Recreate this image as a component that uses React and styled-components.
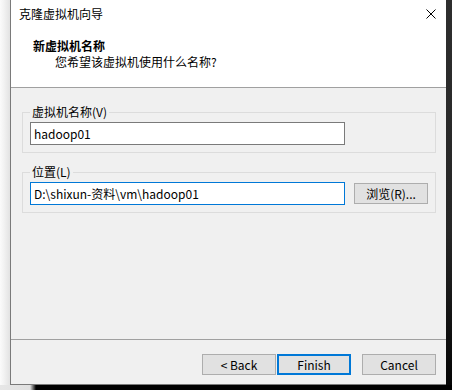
import React from 'react';
import styled, { createGlobalStyle } from 'styled-components';

const GlobalStyle = createGlobalStyle`
  html, body {
    margin: 0;
    padding: 0;
    background: #000;
  }
  body {
    font-family: "Noto Sans CJK SC", "Noto Sans", sans-serif;
    font-size: 12px;
    color: #000;
  }
`

const Desktop = styled.div`
  display: grid;
  grid-template-columns: 10px 436px 6px;
  grid-template-rows: 385px 5px;
  width: 452px;
  height: 390px;
  overflow: hidden;
`

const LeftShadow = styled.div`
  background: linear-gradient(to right, #fbfbfb 0%, #f2f2f2 40%, #e2e2e2 100%);
`

const RightEdge = styled.div`
  background: linear-gradient(to bottom, #2e2e2e 0%, #262626 60%, #050505 100%);
`

const BottomShadow = styled.div`
  grid-column: 1 / span 2;
  background: linear-gradient(to right, #e6e6e6 0px, #e0e0e0 30px, #000 36px);
`

const BottomRight = styled.div`
  background: #000;
`

const Window = styled.div`
  display: flex;
  flex-direction: column;
  background: #f0f0f0;
  border-left: 1px solid #7a7a7a;
  border-bottom: 1px solid #7a7a7a;
`

const Header = styled.div`
  background: #fff;
  height: 87px;
  border-bottom: 1px solid #a0a0a0;
`

const TitleBar = styled.div`
  display: flex;
  align-items: center;
  justify-content: space-between;
  height: 28px;
  padding: 0 10px 0 8px;
`

const Title = styled.span`
  line-height: 16px;
`

const CloseIcon = styled.svg`
  width: 10px;
  height: 10px;
`

const Heading = styled.div`
  padding: 10px 0 0 22px;
  line-height: 16px;
`

const HeadingTitle = styled.div`
  font-weight: bold;
`

const HeadingSub = styled.div`
  padding-left: 22px;
`

const Body = styled.div`
  flex: 1;
  display: flex;
  flex-direction: column;
  gap: 11px;
  padding: 16px 10px 0 11px;
`

const Group = styled.fieldset`
  margin: 0;
  padding: 2px 7px 7px 7px;
  border: 1px solid #dcdcdc;
  min-width: 0;
`

const Legend = styled.legend`
  padding: 0 2px;
  line-height: 16px;
`

const Row = styled.div`
  display: flex;
  align-items: center;
  gap: 9px;
`

const TextInput = styled.input`
  box-sizing: border-box;
  width: 315px;
  height: 23px;
  margin: 0;
  padding: 0 3px;
  font: inherit;
  color: #000;
  background: #fff;
  border: 1px solid ${p => (p.$focused ? '#0078d7' : '#7a7a7a')};
  outline: none;
`

const Button = styled.button`
  box-sizing: border-box;
  width: 74px;
  height: 21px;
  margin: 0;
  padding: 0;
  font: inherit;
  color: #000;
  background: #e1e1e1;
  border: ${p => (p.$default ? '2px solid #0078d7' : '1px solid #adadad')};
`

const Footer = styled.div`
  display: flex;
  justify-content: flex-end;
  height: 45px;
  box-sizing: border-box;
  padding: 14px 10px 0 0;
  border-top: 1px solid #a0a0a0;
`

const FooterButtons = styled.div`
  display: flex;
  gap: 1px;

  & > :last-child {
    margin-left: 10px;
  }
`

const App = () => {
  return (
    <>
      <GlobalStyle />
      <Desktop>
        <LeftShadow />
        <Window>
          <Header>
            <TitleBar>
              <Title>克隆虚拟机向导</Title>
              <CloseIcon viewBox="0 0 10 10">
                <path d="M0.5 0.5 L9.5 9.5 M9.5 0.5 L0.5 9.5" stroke="#000" strokeWidth="1" fill="none" />
              </CloseIcon>
            </TitleBar>
            <Heading>
              <HeadingTitle>新虚拟机名称</HeadingTitle>
              <HeadingSub>您希望该虚拟机使用什么名称?</HeadingSub>
            </Heading>
          </Header>
          <Body>
            <Group>
              <Legend>虚拟机名称(V)</Legend>
              <Row>
                <TextInput defaultValue="hadoop01" />
              </Row>
            </Group>
            <Group>
              <Legend>位置(L)</Legend>
              <Row>
                <TextInput $focused defaultValue="D:\shixun-资料\vm\hadoop01" />
                <Button>浏览(R)...</Button>
              </Row>
            </Group>
          </Body>
          <Footer>
            <FooterButtons>
              <Button>&lt; Back</Button>
              <Button $default>Finish</Button>
              <Button>Cancel</Button>
            </FooterButtons>
          </Footer>
        </Window>
        <RightEdge />
        <BottomShadow />
        <BottomRight />
      </Desktop>
    </>
  );
}

export default App;
